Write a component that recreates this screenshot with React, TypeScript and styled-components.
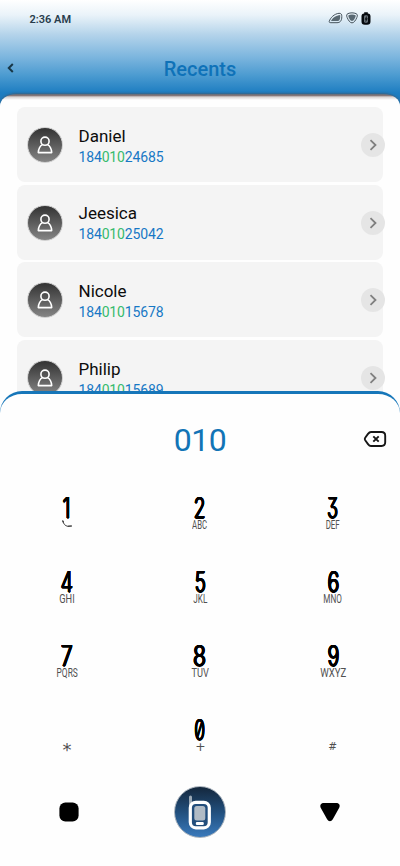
import React from "react";
import styled, { createGlobalStyle } from "styled-components";

const GlobalStyle = createGlobalStyle`
  * { box-sizing: border-box; }
  body { margin: 0; background: #fff; font-family: Roboto, "Liberation Sans", sans-serif; }
  button { border: 0; padding: 0; background: none; font: inherit; color: inherit; display: flex; }
  svg { display: block; }
`;

const Screen = styled.main`
  width: 400px;
  height: 866px;
  overflow: hidden;
  display: flex;
  flex-direction: column;
  background: #fefefe;
`;

const Header = styled.header`
  height: 106px;
  flex: none;
  background: linear-gradient(#ffffff 0, #eaf3f9 15px, #b3d3ea 35px, #7fb7df 56px, #4a9ad0 76px, #1d7dc1 93px, #1c75b8 107px);
`;

const StatusBar = styled.div`
  height: 38px;
  padding: 0 29.5px;
  display: flex;
  align-items: center;
  justify-content: space-between;
  font-size: 11px;
  font-weight: 600;
  color: #283c4c;
`;

const StatusIcons = styled.div`
  display: flex;
  align-items: center;
  margin-top: -2px;
  gap: 3px;
`;

const TitleBar = styled.div`
  height: 60px;
  padding-left: 6px;
  display: grid;
  grid-template-columns: 12px 1fr 18px;
  align-items: center;
`;

const Title = styled.h1`
  margin: 1px 0 0;
  text-align: center;
  font-size: 20px;
  line-height: 24px;
  font-weight: 500;
  color: #0f72b8;
`;

const Recents = styled.section`
  height: 312px;
  flex: none;
  margin-top: -12px;
  padding: 13px 17px 0;
  border-radius: 16px 16px 0 0 / 12px 12px 0 0;
  background: linear-gradient(#5c6b7c 0, #85787a 1.5px, #d9d3d2 3px, #fefefe 6px);
  box-shadow: 0 -1px 2px #35658a;
  display: flex;
  flex-direction: column;
  gap: 2.7px;
  overflow: hidden;
`;

const Card = styled.article`
  height: 75px;
  flex: none;
  padding: 1px 0 0 10px;
  border-radius: 8px;
  background: #f4f4f4;
  display: flex;
  align-items: center;
`;

const Avatar = styled.div`
  width: 36px;
  height: 36px;
  border-radius: 50%;
  border: 1.5px solid #d0d0d0;
  background: linear-gradient(#333, #858585);
  display: grid;
  place-items: center;
`;

const Contact = styled.div`
  flex: 1;
  margin-left: 15.5px;
  padding-top: 2px;
`;

const Name = styled.div`
  font-size: 17px;
  line-height: 21px;
  color: #0c0c0c;
`;

const Phone = styled.div`
  font-size: 14px;
  line-height: 20px;
  letter-spacing: -0.15px;
  color: #1778c5;
`;

const Match = styled.span`
  color: #36bb6c;
`;

const OpenButton = styled.button`
  && {
    width: 24px;
    height: 24px;
    margin-right: -1.5px;
    border-radius: 50%;
    background: #e5e5e5;
    align-items: center;
    justify-content: center;
  }
`;

const Dialer = styled.section`
  height: 475px;
  flex: none;
  margin-top: -15px;
  position: relative;
  border-top: 3px solid #1676b9;
  border-radius: 22px 22px 0 0;
  background: #fefefe;
`;

const NumberRow = styled.div`
  height: 90px;
  padding: 0 13px 0 37px;
  display: grid;
  grid-template-columns: 1fr 24px;
  align-items: center;
`;

const Typed = styled.output`
  margin-top: 1px;
  text-align: center;
  font-size: 32px;
  line-height: 40px;
  letter-spacing: -0.5px;
  color: #1274b6;
`;

const Keypad = styled.div`
  padding: 0 0.5px;
  display: grid;
  grid-template-columns: repeat(3, 1fr);
  grid-auto-rows: 74px;
`;

const Key = styled.button`
  && {
    flex-direction: column;
    align-items: center;
    padding-top: 12px;
  }
`;

const Digit = styled.span<{ $squeeze: number }>`
  height: 23px;
  font-family: Inter, sans-serif;
  font-size: 28px;
  line-height: 25px;
  font-weight: 300;
  font-feature-settings: "zero", "cv09";
  color: #000;
  text-shadow: 0.9px 0 #000, -0.9px 0 #000, 0 0.5px #000, 0 -0.5px #000,
    0.6px 0.4px #000, -0.6px 0.4px #000, 0.6px -0.4px #000, -0.6px -0.4px #000;
  transform: scaleX(${(p) => p.$squeeze});
`;

const Letters = styled.span<{ $squeeze: number }>`
  height: 12px;
  display: flex;
  align-items: center;
  font-size: 12px;
  line-height: 12px;
  font-weight: 400;
  color: #505050;
  transform: scaleX(${(p) => p.$squeeze});
`;

const Symbol = styled(Letters)<{ $size: number; $drop: number }>`
  font-family: "DejaVu Sans", sans-serif;
  font-size: ${(p) => p.$size}px;
  padding-top: ${(p) => p.$drop}px;
`;

const Actions = styled.nav`
  height: 54px;
  margin-top: 4.5px;
  padding: 0 59px;
  display: flex;
  align-items: center;
  justify-content: space-between;
`;

const CallButton = styled.button`
  && {
    width: 52px;
    height: 52px;
    margin-left: 2px;
    border: 1.5px solid #a8b2bc;
    border-radius: 50%;
    background: linear-gradient(#14273c, #235383 55%, #3a7abc);
    align-items: center;
    justify-content: center;
  }
`;

const contacts = [
  { name: "Daniel", parts: ["184", "010", "24685"] },
  { name: "Jeesica", parts: ["184", "010", "25042"] },
  { name: "Nicole", parts: ["184", "010", "15678"] },
  { name: "Philip", parts: ["184", "010", "15689"] },
];

const keys = [
  { digit: "1", letters: "", w: 0.7, lw: 1 },
  { digit: "2", letters: "ABC", w: 0.68, lw: 0.65 },
  { digit: "3", letters: "DEF", w: 0.64, lw: 0.66 },
  { digit: "4", letters: "GHI", w: 0.7, lw: 0.77 },
  { digit: "5", letters: "JKL", w: 0.67, lw: 0.68 },
  { digit: "6", letters: "MNO", w: 0.7, lw: 0.68 },
  { digit: "7", letters: "PQRS", w: 0.74, lw: 0.7 },
  { digit: "8", letters: "TUV", w: 0.76, lw: 0.77 },
  { digit: "9", letters: "WXYZ", w: 0.7, lw: 0.8 },
  { digit: "", symbol: "*", w: 1, lw: 1, size: 18, drop: 6 },
  { digit: "0", symbol: "+", w: 0.62, lw: 0.95, size: 13, drop: 0 },
  { digit: "", symbol: "#", w: 1, lw: 0.95, size: 11, drop: 0 },
];

const SignalIcon = () => (
  <svg width="15" height="12" viewBox="0 0 15 12">
    <path d="M1.2 9.5C2.3 5.7 6.3 1.8 11 1.3c2.200-.2 2.900 1.200 2.800 3.400 0 4-1.600 6-4.800 6H3c-1.200 0-2-.3-1.800-1.200Z" fill="none" stroke="#46535c" />
    <path d="M3 9C4.400 5.800 8 3.300 12.200 2.900c.2 3.800-.5 6.100-3.200 6.100Z" fill="#5a6972" />
  </svg>
);

const WifiIcon = () => (
  <svg width="12" height="12" viewBox="0 0 12 12">
    <path d="M2 1.600c2.400-1 5.600-1 8 0 1.600.7 1.600 2 .9 3.800C9.900 8 8 10.900 6 10.900S2.100 8 1.100 5.400C.4 3.600.4 2.300 2 1.600Z" fill="none" stroke="#46535c" />
    <path d="M2.200 3.500c2-1.500 5.600-1.500 7.600 0C9.300 6 7.600 9 6 9S2.700 6 2.200 3.500Z" fill="#596872" />
  </svg>
);

const BatteryIcon = () => (
  <svg width="10" height="13" viewBox="0 0 10 13">
    <path d="M3.200 1.500V.3h3.600v1.200C8.700 1.700 9.500 2.500 9.500 4.300v5.200c0 2.400-1.100 3.300-3.300 3.300H3.800C1.600 12.800.5 11.900.5 9.500V4.300c0-1.800.8-2.600 2.700-2.800Z" fill="#05090d" />
    <path d="M3 4.500C3 3.500 4 3.300 5 3.300s2 .2 2 1.200v4.800c0 1-.8 1.500-2 1.500s-2-.5-2-1.500Z" fill="#687178" />
    <path d="M5.500 4.500 4 7.400h1.100L4.700 9.600l1.700-3H5.300Z" fill="#05090d" stroke="#05090d" strokeWidth=".4" />
  </svg>
);

const PersonIcon = () => (
  <svg width="18" height="20" viewBox="0 0 18 20" fill="none" stroke="#fff" strokeWidth="1.600" strokeLinejoin="round">
    <circle cx="9" cy="6.200" r="4.100" />
    <path d="M6.500 9.600C4 10.800 2.600 13.200 2.300 17.600h13.400c-.3-4.400-1.700-6.800-4.200-8" />
  </svg>
);

const VoicemailMark = () => (
  <svg width="12" height="12" viewBox="0 0 12 12" fill="none" stroke="#444" strokeLinecap="round">
    <path d="M2 2.300c.4 2.600 2 4.500 4.500 5" strokeWidth="1" />
    <path d="m1.800 2 .5 1M7.300 7.300l3-.3" strokeWidth="1.500" />
  </svg>
);

export default function App() {
  return (
    <>
      <GlobalStyle />
      <Screen>
        <Header>
          <StatusBar>
            <span>2:36 AM</span>
            <StatusIcons>
              <SignalIcon />
              <WifiIcon />
              <BatteryIcon />
            </StatusIcons>
          </StatusBar>
          <TitleBar>
            <button aria-label="Back">
              <svg width="10" height="12" viewBox="0 0 10 12" fill="none" stroke="#183747" strokeWidth="2">
                <path d="M6.800 2 2.800 6l4 4" />
              </svg>
            </button>
            <Title>Recents</Title>
          </TitleBar>
        </Header>
        <Recents>
          {contacts.map((c) => (
            <Card key={c.name}>
              <Avatar>
                <PersonIcon />
              </Avatar>
              <Contact>
                <Name>{c.name}</Name>
                <Phone>
                  {c.parts[0]}
                  <Match>{c.parts[1]}</Match>
                  {c.parts[2]}
                </Phone>
              </Contact>
              <OpenButton aria-label={`Open ${c.name}`}>
                <svg width="12" height="14" viewBox="0 0 12 14" fill="none" stroke="#808080" strokeWidth="1.800">
                  <path d="m3.500 2.200 5 4.800-5 4.800" />
                </svg>
              </OpenButton>
            </Card>
          ))}
        </Recents>
        <Dialer>
          <NumberRow>
            <Typed>010</Typed>
            <button aria-label="Delete">
              <svg width="24" height="18" viewBox="0 0 24 18" fill="none" stroke="#161616" strokeWidth="1.900" strokeLinejoin="round">
                <path d="M8 2h10.500c2.300 0 3.700 1.400 3.700 3.700v6.600c0 2.300-1.400 3.700-3.700 3.700H8c-1.500 0-2.100-.7-3-1.900L2.200 10.300c-.6-.9-.6-1.700 0-2.600L5 3.900C5.900 2.700 6.500 2 8 2Z" />
                <path d="m10.300 6.300 5.400 5.400m0-5.400-5.400 5.400" />
              </svg>
            </button>
          </NumberRow>
          <Keypad>
            {keys.map((k, i) => (
              <Key key={i}>
                <Digit $squeeze={k.w}>{k.digit}</Digit>
                {k.digit === "1" ? (
                  <VoicemailMark />
                ) : k.symbol ? (
                  <Symbol $squeeze={k.lw} $size={k.size} $drop={k.drop}>
                    {k.symbol}
                  </Symbol>
                ) : (
                  <Letters $squeeze={k.lw}>{k.letters}</Letters>
                )}
              </Key>
            ))}
          </Keypad>
          <Actions>
            <button aria-label="Menu">
              <svg width="20" height="20" viewBox="0 0 20 20">
                <rect x=".4" y=".4" width="19.200" height="19.200" rx="6" />
              </svg>
            </button>
            <CallButton aria-label="Call">
              <svg width="26" height="36" viewBox="0 0 26 36">
                <path d="M3.500 3v11" stroke="#9aa8b5" strokeWidth="3" strokeLinecap="round" />
                <rect x="3.300" y="8.300" width="19" height="25.500" rx="5.500" fill="#234e7c" stroke="#fff" strokeWidth="3.200" />
                <rect x="7.300" y="12" width="11" height="14.500" rx="2.500" fill="#b1bbc5" />
                <rect x="8.800" y="28" width="8" height="3" rx="1.200" fill="#fff" />
              </svg>
            </CallButton>
            <button aria-label="Hide keypad">
              <svg width="22" height="20" viewBox="0 0 22 20">
                <path d="M5 1h12c3.700 0 4.600 2.700 2.800 5.600l-6 10.700c-1.500 2.600-4.200 2.600-5.700 0l-6-10.700C.5 3.700 1.400 1 5 1Z" />
              </svg>
            </button>
          </Actions>
        </Dialer>
      </Screen>
    </>
  );
}
